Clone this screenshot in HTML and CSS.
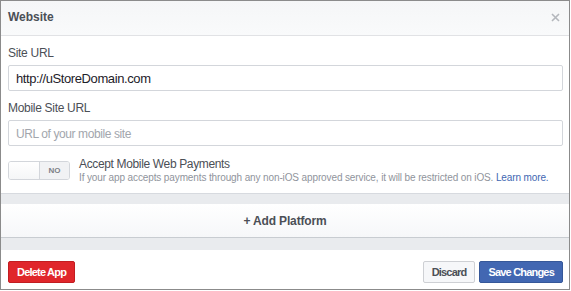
FILE: index.html
```html
<!DOCTYPE html>
<html lang="en">
<head>
  <meta charset="UTF-8">
  <title>Website</title>
  <link rel="stylesheet" href="styles.css">
</head>
<body>
  <div class="dialog">
    <header class="dialog-head">
      <h2>Website</h2>
      <svg class="close" width="9" height="9" viewBox="0 0 9 9"><path d="M1 1L8 8M8 1L1 8" stroke="#b4b7bc" stroke-width="1.6"/></svg>
    </header>
    <section class="platform">
      <label class="field-label">Site URL</label>
      <input class="field" type="text" value="http://uStoreDomain.com">
      <label class="field-label">Mobile Site URL</label>
      <input class="field" type="text" placeholder="URL of your mobile site">
      <div class="payments">
        <div class="toggle">
          <span class="toggle-off"></span>
          <span class="toggle-no">NO</span>
        </div>
        <div class="payments-text">
          <div class="payments-title">Accept Mobile Web Payments</div>
          <div class="payments-note">If your app accepts payments through any non-iOS approved service, it will be restricted on iOS. <a href="#">Learn more.</a></div>
        </div>
      </div>
    </section>
    <div class="gap"></div>
    <div class="add-platform">+ Add Platform</div>
    <div class="gap gap-low"></div>
    <footer class="dialog-foot">
      <button class="btn btn-danger">Delete App</button>
      <div class="foot-right">
        <button class="btn">Discard</button>
        <button class="btn btn-primary">Save Changes</button>
      </div>
    </footer>
  </div>
</body>
</html>
```

FILE: styles.css
```css
body {
  margin: 0;
  font-family: 'Liberation Sans', Arial, sans-serif;
  background: #fff;
}
.dialog {
  width: 570px;
  height: 290px;
  box-sizing: border-box;
  border: 1px solid #8b8b8b;
  display: flex;
  flex-direction: column;
  background: #fff;
}
.dialog-head {
  height: 35px;
  box-sizing: border-box;
  background: linear-gradient(#f5f6f7, #f9fafb);
  border-bottom: 1px solid #e1e2e5;
  display: flex;
  align-items: center;
  justify-content: space-between;
  padding: 0 9px 2px 7px;
}
.dialog-head h2 {
  margin: 0;
  font-size: 12px;
  font-weight: bold;
  color: #4b4f56;
}
.platform {
  padding: 10px 6px 8px 7px;
}
.field-label {
  display: block;
  font-size: 12px;
  line-height: 14px;
  letter-spacing: -0.3px;
  color: #4b4f56;
  margin-bottom: 5px;
}
.field {
  display: block;
  box-sizing: border-box;
  width: 100%;
  height: 26px;
  border: 1px solid #d3d6db;
  border-radius: 2px;
  padding: 0 7px;
  font-family: inherit;
  font-size: 13px;
  letter-spacing: -0.4px;
  color: #1d2129;
  margin: 0 0 10px 0;
}
.field::placeholder {
  color: #a2a6ad;
  font-size: 12px;
}
.payments {
  display: flex;
  align-items: flex-start;
  gap: 9px;
  margin-top: 10px;
}
.toggle {
  display: flex;
  width: 62px;
  height: 19px;
  box-sizing: border-box;
  border: 1px solid #d3d6db;
  border-radius: 3px;
  overflow: hidden;
  margin-top: 5px;
}
.toggle-off {
  width: 30px;
  background: linear-gradient(#fff, #f5f6f7);
  border-right: 1px solid #d3d6db;
}
.toggle-no {
  flex: 1;
  background: #f1f2f4;
  font-size: 8px;
  font-weight: bold;
  color: #7d8086;
  display: flex;
  align-items: center;
  justify-content: center;
}
.payments-title {
  font-size: 12px;
  line-height: 14px;
  letter-spacing: -0.35px;
  color: #4b4f56;
  margin-top: 1px;
}
.payments-note {
  font-size: 10px;
  line-height: 14px;
  letter-spacing: -0.12px;
  color: #90949c;
  white-space: nowrap;
}
.payments-note a {
  color: #4267b2;
  text-decoration: none;
}
.gap {
  height: 10px;
  background: #e9ebee;
  border-top: 1px solid #d7dadf;
}
.gap-low {
  height: 12px;
  border-top: 1px solid #c8ccd1;
}
.add-platform {
  height: 33px;
  background: linear-gradient(#fff, #f6f7f9);
  display: flex;
  align-items: center;
  justify-content: center;
  font-size: 12px;
  font-weight: bold;
  letter-spacing: -0.15px;
  color: #4b4f56;
}
.dialog-foot {
  flex: 1;
  display: flex;
  align-items: flex-start;
  justify-content: space-between;
  padding: 11px 6px 0 7px;
}
.foot-right {
  display: flex;
  gap: 4px;
}
.btn {
  height: 22px;
  padding: 0 8px;
  border: 1px solid #ced0d4;
  border-radius: 2px;
  background: #f6f7f9;
  font-family: inherit;
  font-size: 11px;
  font-weight: bold;
  letter-spacing: -0.8px;
  color: #4b4f56;
}
.btn-danger {
  background: #e0262b;
  border-color: #c21d21;
  color: #fff;
}
.btn-primary {
  background: #4267b2;
  border-color: #365899;
  color: #fff;
}
```
